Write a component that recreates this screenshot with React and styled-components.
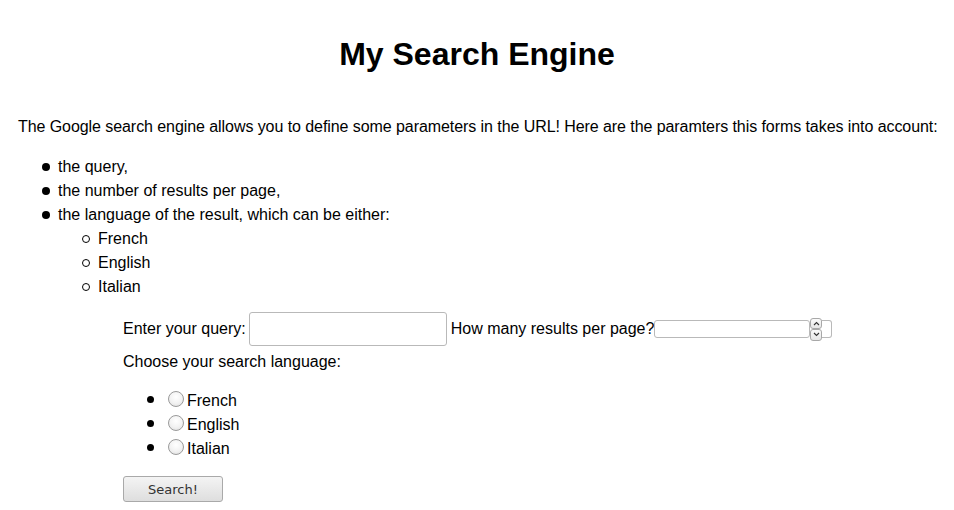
import React from "react";
import styled, { createGlobalStyle, css } from "styled-components";

const Global = createGlobalStyle`
  html, body { margin: 0; padding: 0; background: #fff; }
  body {
    font-family: "Liberation Sans", Arial, sans-serif;
    font-size: 16px;
    line-height: 24px;
    color: #000;
  }
`;

const Page = styled.div`
  padding: 0 18px;
`;

const Title = styled.h1`
  margin: 0;
  padding-top: 32px;
  height: 44px;
  line-height: 44px;
  font-size: 32px;
  font-weight: bold;
  text-align: center;
`;

const Intro = styled.p`
  margin: 39px 0 0;
  white-space: nowrap;
  letter-spacing: -0.07px;
`;

const List = styled.ul`
  margin: ${(p) => (p.$nested ? "0" : "16px 0 0")};
  padding-left: 40px;
  list-style: none;
`;

const markerBase = css`
  position: relative;
  &::before {
    content: "";
    position: absolute;
    box-sizing: border-box;
    left: -16px;
    top: 8px;
    width: 8px;
    height: 8px;
    border-radius: 50%;
  }
`;

const Item = styled.li`
  ${markerBase}
  &::before {
    ${(p) =>
      p.$circle
        ? css`
            border: 1px solid #000;
            background: transparent;
          `
        : css`
            background: #000;
          `}
  }
`;

const Form = styled.form`
  margin: 13px 0 0 105px;
`;

const Row = styled.div`
  display: flex;
  align-items: center;
  height: 34px;
`;

const Label = styled.label`
  margin-right: ${(p) => (p.$tight ? "0" : "3px")};
`;

const TextInput = styled.input`
  box-sizing: border-box;
  width: 198px;
  height: 34px;
  border: 1px solid #b9b9b9;
  border-radius: 3px;
  margin: 0 4px 0 0;
  padding: 0 6px;
  font: inherit;
  outline: none;
`;

const NumberWrap = styled.span`
  display: inline-flex;
  align-items: center;
  width: 178px;
  height: 24px;
`;

const NumberInput = styled.input`
  box-sizing: border-box;
  width: 156px;
  height: 18px;
  border: 1px solid #b9b9b9;
  border-radius: 3px;
  margin: 0;
  padding: 0 3px;
  font: inherit;
  font-size: 12px;
  outline: none;
  -moz-appearance: textfield;
  &::-webkit-outer-spin-button,
  &::-webkit-inner-spin-button {
    -webkit-appearance: none;
    margin: 0;
  }
`;

const SpinCol = styled.span`
  display: flex;
  flex-direction: column;
  width: 12px;
  height: 23px;
`;

const SpinBtn = styled.span`
  box-sizing: border-box;
  flex: 1;
  border: 1px solid #a8a8a8;
  border-radius: 3px;
  background: linear-gradient(#fbfbfb, #e6e6e6);
  display: flex;
  align-items: center;
  justify-content: center;
`;

const SpinTail = styled.span`
  box-sizing: border-box;
  width: 10px;
  height: 18px;
  border: 1px solid #b9b9b9;
  border-left: none;
  border-radius: 0 3px 3px 0;
`;

const Choose = styled.div`
  margin-top: 4px;
  line-height: 24px;
`;

const RadioList = styled.ul`
  margin: 15px 0 0;
  padding-left: 40px;
  list-style: none;
`;

const RadioItem = styled.li`
  ${markerBase}
  height: 24px;
  line-height: 24px;
  &::before {
    background: #000;
    top: 7px;
    width: 7px;
    height: 7px;
  }
`;

const RadioLabel = styled.label`
  display: inline-flex;
  align-items: center;
`;

const Radio = styled.span`
  box-sizing: border-box;
  display: inline-block;
  width: 16px;
  height: 16px;
  margin: -4px 3px 0 5px;
  border-radius: 50%;
  border: 1px solid #9a9a9a;
  background: radial-gradient(circle at 50% 35%, #ffffff 0%, #f2f2f2 55%, #dcdcdc 100%);
`;

const Button = styled.button`
  box-sizing: border-box;
  display: block;
  margin-top: 15px;
  width: 100px;
  height: 26px;
  border: 1px solid #a9a9a9;
  border-radius: 3px;
  background: linear-gradient(#f4f4f4, #dedede);
  font-family: "DejaVu Sans", sans-serif;
  font-size: 13px;
  color: #333;
  padding: 0;
`;

const Arrow = ({ up }) => (
  <svg width="7" height="5" viewBox="0 0 7 5">
    <path
      d={up ? "M1 4 L3.5 1.5 L6 4" : "M1 1 L3.5 3.5 L6 1"}
      fill="none"
      stroke="#333"
      strokeWidth="1.1"
    />
  </svg>
);

export default function App() {
  return (
    <>
      <Global />
      <Page>
        <Title>My Search Engine</Title>
        <Intro>
          The Google search engine allows you to define some parameters in the URL! Here are the
          paramters this forms takes into account:
        </Intro>
        <List>
          <Item>the query,</Item>
          <Item>the number of results per page,</Item>
          <Item>
            the language of the result, which can be either:
            <List $nested>
              <Item $circle>French</Item>
              <Item $circle>English</Item>
              <Item $circle>Italian</Item>
            </List>
          </Item>
        </List>
        <Form onSubmit={(e) => e.preventDefault()}>
          <Row>
            <Label htmlFor="q">Enter your query:</Label>
            <TextInput id="q" type="text" />
            <Label htmlFor="num" $tight>How many results per page?</Label>
            <NumberWrap>
              <NumberInput id="num" type="number" />
              <SpinCol>
                <SpinBtn><Arrow up /></SpinBtn>
                <SpinBtn><Arrow /></SpinBtn>
              </SpinCol>
              <SpinTail />
            </NumberWrap>
          </Row>
          <Choose>Choose your search language:</Choose>
          <RadioList>
            {["French", "English", "Italian"].map((l) => (
              <RadioItem key={l}>
                <RadioLabel>
                  <Radio />
                  {l}
                </RadioLabel>
              </RadioItem>
            ))}
          </RadioList>
          <Button type="submit">Search!</Button>
        </Form>
      </Page>
    </>
  );
}
